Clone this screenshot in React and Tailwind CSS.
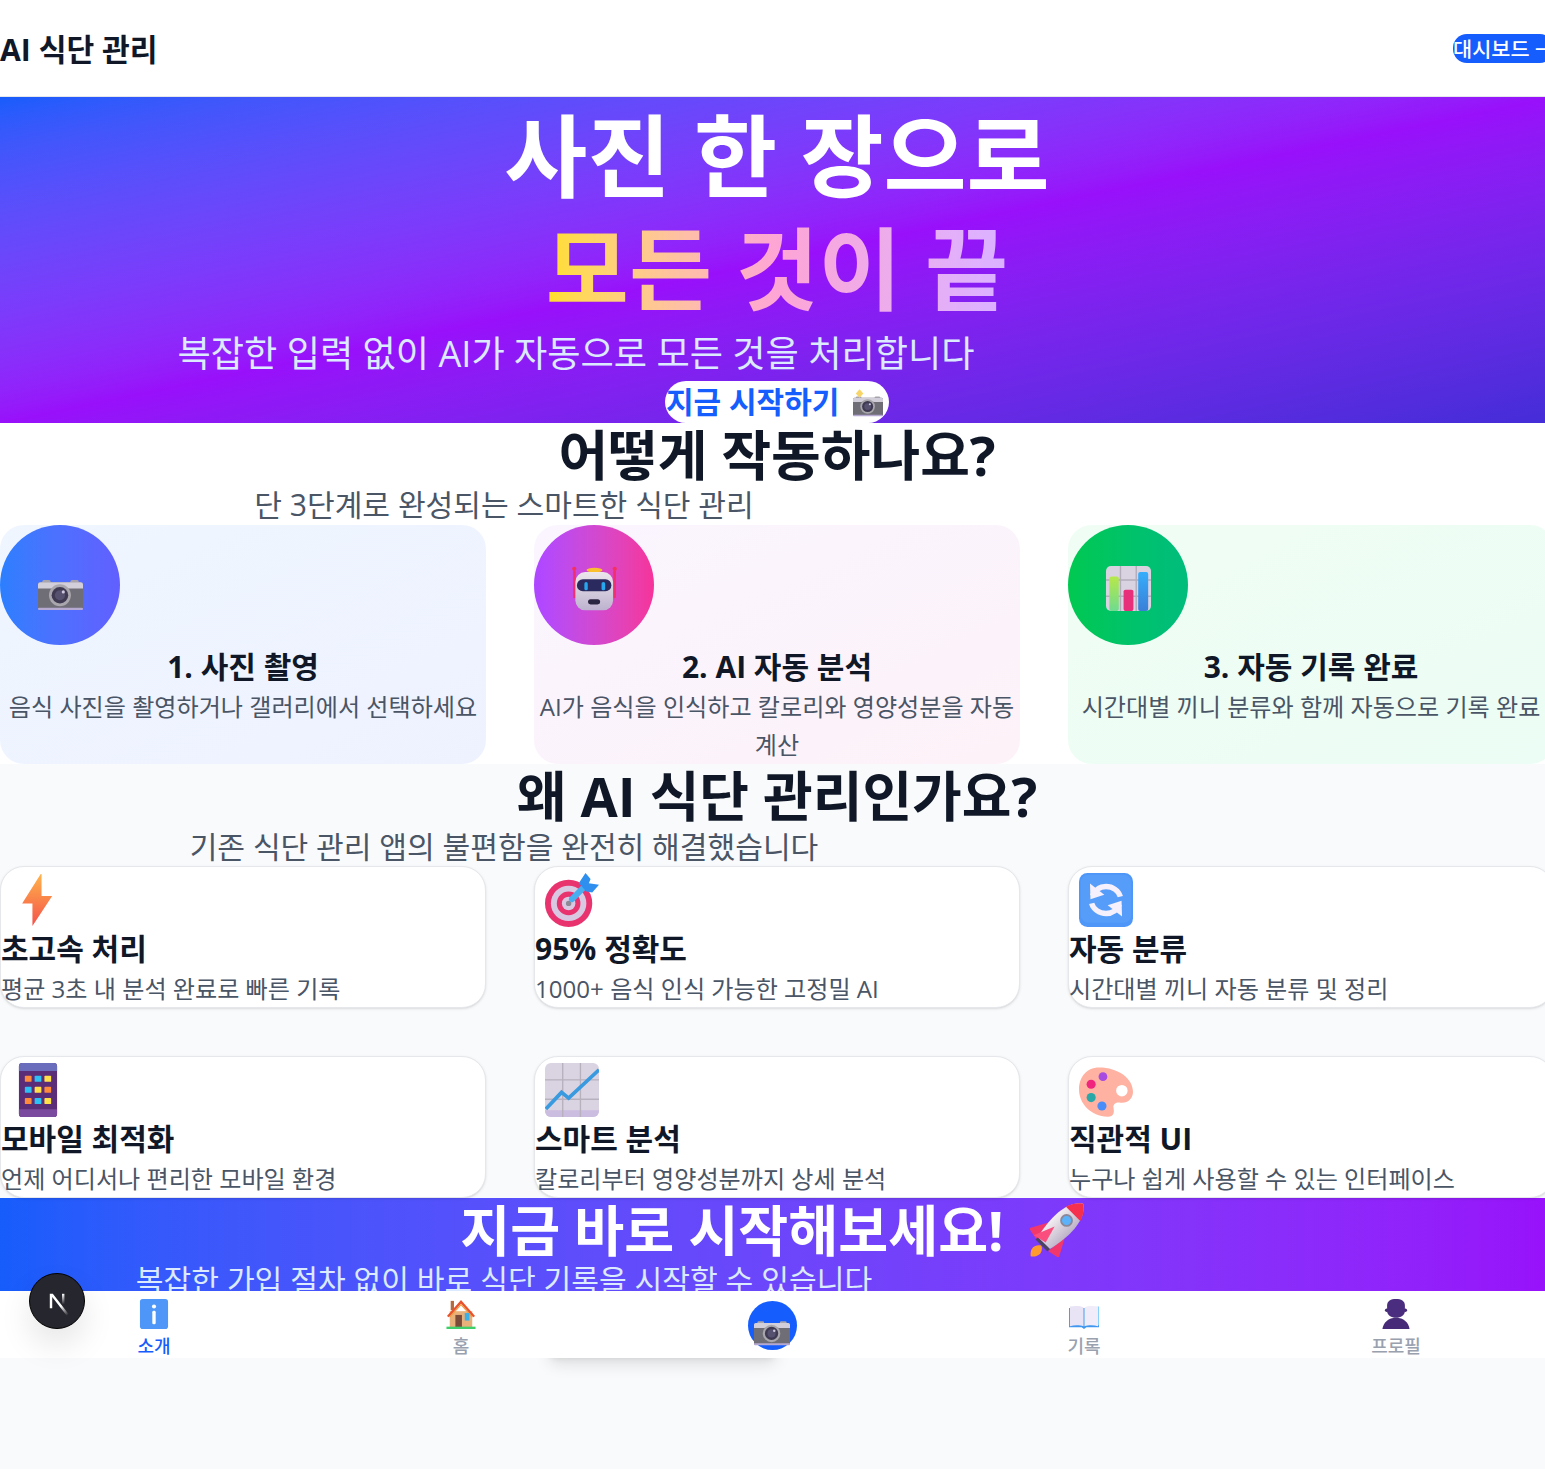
import React from 'react';

/* Fluent-style emoji, all drawn in a 32x32 box */
const CameraBody = () => (
  <>
    <rect x="3" y="10" width="6" height="3" rx="1.2" fill="#a8a5ad" />
    <rect x="23" y="10" width="6" height="3" rx="1.2" fill="#a8a5ad" />
    <rect x="0" y="11.5" width="32" height="19.5" rx="1.6" fill="#6f6d75" />
    <path d="M1.6 11.5h28.8A1.6 1.6 0 0 1 32 13.1V16H0v-2.9A1.6 1.6 0 0 1 1.6 11.5z" fill="#d3cfda" />
    <rect x="0" y="29.6" width="32" height="1.7" rx="0.8" fill="#b5a9d2" />
    <circle cx="15.6" cy="20.8" r="7.8" fill="#a9a7ad" />
    <circle cx="15.6" cy="20.8" r="5.9" fill="#3f3a52" />
    <circle cx="15.6" cy="20.8" r="3.6" fill="#575170" />
    <circle cx="18" cy="18.4" r="1.1" fill="#cfc8e0" />
  </>
);

const Camera = ({ className }) => (
  <svg viewBox="0 0 32 32" className={className}><CameraBody /></svg>
);

const CameraFlash = ({ className }) => (
  <svg viewBox="0 0 32 32" className={className}>
    <CameraBody />
    <path d="M7 2.5l4 4.5L7 11.5 3 7z" fill="#f8d568" />
  </svg>
);

const Robot = ({ className }) => (
  <svg viewBox="0 0 32 32" className={className}>
    <defs>
      <linearGradient id="robotHead" x1="0" y1="0" x2="0" y2="1">
        <stop offset="0" stopColor="#ece7ec" />
        <stop offset="1" stopColor="#bdb2cf" />
      </linearGradient>
    </defs>
    <rect x="0.8" y="3" width="1.8" height="20" rx="0.9" fill="#ef2f6e" />
    <rect x="29.4" y="3" width="1.8" height="20" rx="0.9" fill="#ef2f6e" />
    <circle cx="1.6" cy="2" r="1.5" fill="#f5305f" />
    <circle cx="30.4" cy="2" r="1.5" fill="#f5305f" />
    <ellipse cx="16" cy="2.9" rx="5.7" ry="1.7" fill="#fbc02d" />
    <rect x="2.4" y="4.3" width="26.8" height="27.2" rx="7" fill="url(#robotHead)" />
    <rect x="3.5" y="9.5" width="24.5" height="8.5" rx="4.2" fill="#2b2a5e" />
    <rect x="8.8" y="11.4" width="2.4" height="5.9" rx="1.2" fill="#27a7ee" />
    <rect x="21" y="11.4" width="2.6" height="5.9" rx="1.2" fill="#27a7ee" />
    <rect x="11.4" y="23.7" width="8.6" height="3.6" rx="1.8" fill="#2a2540" />
  </svg>
);

const BarChart = ({ className }) => (
  <svg viewBox="0 0 32 32" className={className}>
    <defs>
      <linearGradient id="barGreen" x1="0" y1="0" x2="0" y2="1">
        <stop offset="0" stopColor="#b7e84a" />
        <stop offset="1" stopColor="#6edb8f" />
      </linearGradient>
      <linearGradient id="barBlue" x1="0" y1="0" x2="0" y2="1">
        <stop offset="0" stopColor="#35aefb" />
        <stop offset="1" stopColor="#3a7fd8" />
      </linearGradient>
    </defs>
    <rect width="32" height="32" rx="3.5" fill="#d9d3e1" />
    <path d="M10.3 0v32M21.5 0v32M0 10h32M0 21.5h32" stroke="#b3acba" strokeWidth="1" />
    <rect x="2.4" y="7.5" width="6.7" height="24.5" rx="1.4" fill="url(#barGreen)" />
    <rect x="12.5" y="16.8" width="7" height="15.2" rx="1.4" fill="#e8307a" />
    <rect x="22.9" y="4.3" width="7.1" height="27.7" rx="1.4" fill="url(#barBlue)" />
  </svg>
);

const Bolt = ({ className }) => (
  <svg viewBox="0 0 32 32" className={className}>
    <defs>
      <linearGradient id="boltFill" x1="0.5" y1="0" x2="0.5" y2="1">
        <stop offset="0" stopColor="#ffb34a" />
        <stop offset="1" stopColor="#f4524a" />
      </linearGradient>
    </defs>
    <polygon points="17.6,0.6 6.6,18 12.7,18 12.7,31.4 24.4,13.6 18.1,13.6 18.1,0.6" fill="url(#boltFill)" />
  </svg>
);

const Target = ({ className }) => (
  <svg viewBox="0 0 32 32" className={className}>
    <circle cx="14" cy="18" r="14" fill="#e8336f" />
    <circle cx="14" cy="18" r="10.5" fill="#d9c8e2" />
    <circle cx="14" cy="18" r="7" fill="#e8336f" />
    <circle cx="14" cy="18" r="4" fill="#d9c8e2" />
    <circle cx="14" cy="18" r="1.6" fill="#8f8996" />
    <path d="M16 15.5L24 7.5" stroke="#47aef0" strokeWidth="3.6" strokeLinecap="round" />
    <path d="M20 6L24 0 27 3.5 26 6 32 7 28 11.5 24.5 11z" fill="#2f8fee" />
  </svg>
);

const Refresh = ({ className }) => (
  <svg viewBox="0 0 32 32" className={className}>
    <rect width="32" height="32" rx="5" fill="#4e97f8" />
    <rect x="1" y="1" width="30" height="28.5" rx="4.5" fill="#559df9" />
    <path d="M8 13.5C9.5 9.8 12.7 8 16 8c4 0 7.5 2.5 8.5 6" fill="none" stroke="#f6effc" strokeWidth="3.2" />
    <path d="M6.5 6.2l.3 9.3 8.2-2.6z" fill="#f6effc" />
    <path d="M24 18.5C22.5 22.2 19.3 24 16 24c-4 0-7.5-2.5-8.5-6" fill="none" stroke="#f6effc" strokeWidth="3.2" />
    <path d="M25.5 25.8l-.3-9.3-8.2 2.6z" fill="#f6effc" />
  </svg>
);

const Tablet = ({ className }) => {
  const orange = '#ff8a3c';
  const blue = '#2cc0f5';
  const yellow = '#ffe04a';
  const rows = [
    [orange, blue, yellow],
    [blue, yellow, orange],
    [orange, blue, yellow],
  ];
  return (
    <svg viewBox="0 0 32 32" className={className}>
      <rect x="4.7" y="0" width="22.6" height="32" rx="2" fill="#5b2d78" />
      <path d="M6.7 0h18.6a2 2 0 0 1 2 2v2.7H4.7V2a2 2 0 0 1 2-2z" fill="#6a6cbc" />
      <path d="M4.7 27.4h22.6V30a2 2 0 0 1-2 2H6.7a2 2 0 0 1-2-2z" fill="#7a4a9e" />
      {rows.map((row, i) =>
        row.map((c, j) => (
          <rect key={`${i}-${j}`} x={8.2 + j * 5.8} y={7.5 + i * 6.6} width="4" height="3.6" rx="0.5" fill={c} />
        ))
      )}
    </svg>
  );
};

const LineChart = ({ className }) => (
  <svg viewBox="0 0 32 32" className={className}>
    <rect width="32" height="32" rx="3.5" fill="#dad4e2" />
    <path d="M0 28h32v.5a3.5 3.5 0 0 1-3.5 3.5h-25A3.5 3.5 0 0 1 0 28.5z" fill="#cbbde0" />
    <path d="M10.5 0v32M21 0v32M0 10h32M0 21.5h32" stroke="#b7b0bd" strokeWidth="0.8" />
    <path d="M0.5 27.3L9.8 17.4 14 20.8 32 4" fill="none" stroke="#3a9ae0" strokeWidth="2.2" />
  </svg>
);

const Palette = ({ className }) => (
  <svg viewBox="0 0 32 32" className={className}>
    <path
      fillRule="evenodd"
      d="M12 2.6C4 2.6 0 9 0 15.5 0 24 7 31.5 17 31.8c3.5.1 4-2.3 3.5-4.8-.5-2.5 1-4 4-3.5 4.5.5 7.5-2.5 7.5-6.5C32 9 23 2.6 12 2.6zM25.4 13a3.4 3.4 0 1 1 0 6.8 3.4 3.4 0 0 1 0-6.8z"
      fill="#ffb2a2"
    />
    <circle cx="14.2" cy="8.1" r="2.6" fill="#a84be0" />
    <circle cx="7.2" cy="12.6" r="2.7" fill="#f0267e" />
    <circle cx="7.2" cy="20.5" r="2.7" fill="#2aa8a8" />
    <circle cx="13.6" cy="25.5" r="2.7" fill="#4a8cf8" />
  </svg>
);

const Rocket = ({ className }) => (
  <svg viewBox="0 0 32 32" className={className}>
    <defs>
      <linearGradient id="rocketBody" x1="0" y1="0" x2="1" y2="0">
        <stop offset="0" stopColor="#f4eff2" />
        <stop offset="1" stopColor="#bdb3c8" />
      </linearGradient>
    </defs>
    <g transform="rotate(45 16 16)">
      <path d="M16 29c-4 2.5-3.5 6.5 0 9 3.5-2.5 4-6.5 0-9z" fill="#ff9a2e" />
      <path d="M9.5 16L3.5 27l7.5 1.5z" fill="#f2386a" />
      <path d="M22.5 16L28.5 27 21 28.5z" fill="#f2386a" />
      <path d="M16 -6C23.5 -1 24.5 12 21 27h-10C7.5 12 8.5 -1 16 -6z" fill="url(#rocketBody)" />
      <path d="M16 -6c3 2 5 5 6 8.5h-12c1-3.5 3-6.5 6-8.5z" fill="#f5304e" />
      <rect x="11" y="27" width="10" height="2" fill="#4a4460" />
      <path d="M13.5 15.5L8.5 28l8-2z" fill="#fa4f7e" />
      <circle cx="16" cy="8" r="3.8" fill="#8c8799" />
      <circle cx="16" cy="8" r="2.7" fill="#5bb2fb" />
    </g>
  </svg>
);

const Info = ({ className }) => (
  <svg viewBox="0 0 32 32" className={className}>
    <rect x="1" width="30" height="32" rx="3" fill="#4e97f8" />
    <circle cx="16" cy="8" r="2.2" fill="#fff" />
    <rect x="14.2" y="12.5" width="3.6" height="14.5" rx="1.5" fill="#fff" />
  </svg>
);

const House = ({ className }) => (
  <svg viewBox="0 0 32 32" className={className}>
    <rect x="5" y="2" width="3.5" height="10" fill="#b5693f" />
    <rect x="4" y="13" width="24" height="17" fill="#e8b07a" />
    <path d="M16 1L1 18l2 1.5L16 5l13 14.5 2-1.5z" fill="#e8532e" />
    <path d="M16 5L4 18.5V20L16 7l12 13v-1.5z" fill="#f09a3e" />
    <rect x="10" y="17" width="7" height="13" fill="#7b4b3a" />
    <rect x="20" y="15" width="5" height="8" fill="#3ab0e8" />
    <rect x="0.5" y="29.5" width="31" height="2.5" fill="#3fcf6a" />
  </svg>
);

const Book = ({ className }) => (
  <svg viewBox="0 0 32 32" className={className}>
    <path d="M0 9.5v20.5h13.5l2.5 2 2.5-2H32V9.5z" fill="#3f98ee" />
    <path d="M30.5 8h1.5v20h-1.5z" fill="#7fd0fa" />
    <path d="M1 8c5-1 11-1 14.5 1v20c-4-1.5-10-1.5-14.5 0z" fill="#e9e3f6" />
    <path d="M31 8c-5-1-11-1-14.5 1v20c4-1.5 10-1.5 14.5 0z" fill="#f0ecfa" />
  </svg>
);

const Person = ({ className }) => (
  <svg viewBox="0 0 32 32" className={className}>
    <circle cx="6" cy="12" r="1.8" fill="#452a75" />
    <circle cx="26" cy="12" r="1.8" fill="#452a75" />
    <path d="M6.5 7c0-5 4-7 9.5-7s9.5 2 9.5 7v6c0 4-4.5 7-9.5 7s-9.5-3-9.5-7z" fill="#4a2d7e" />
    <path d="M1.5 32c1-7 6.5-12 14.5-12s13.5 5 14.5 12z" fill="#472b78" />
  </svg>
);

const steps = [
  {
    Icon: Camera,
    title: '1. 사진 촬영',
    desc: '음식 사진을 촬영하거나 갤러리에서 선택하세요',
    card: 'bg-gradient-to-br from-blue-50 to-indigo-50',
    circle: 'bg-gradient-to-r from-blue-500 to-indigo-500',
  },
  {
    Icon: Robot,
    title: '2. AI 자동 분석',
    desc: 'AI가 음식을 인식하고 칼로리와 영양성분을 자동 계산',
    card: 'bg-gradient-to-br from-purple-50 to-pink-50',
    circle: 'bg-gradient-to-r from-purple-500 to-pink-500',
  },
  {
    Icon: BarChart,
    title: '3. 자동 기록 완료',
    desc: '시간대별 끼니 분류와 함께 자동으로 기록 완료',
    card: 'bg-gradient-to-br from-green-50 to-emerald-50',
    circle: 'bg-gradient-to-r from-green-500 to-emerald-500',
  },
];

const features = [
  { Icon: Bolt, title: '초고속 처리', desc: '평균 3초 내 분석 완료로 빠른 기록' },
  { Icon: Target, title: '95% 정확도', desc: '1000+ 음식 인식 가능한 고정밀 AI' },
  { Icon: Refresh, title: '자동 분류', desc: '시간대별 끼니 자동 분류 및 정리' },
  { Icon: Tablet, title: '모바일 최적화', desc: '언제 어디서나 편리한 모바일 환경' },
  { Icon: LineChart, title: '스마트 분석', desc: '칼로리부터 영양성분까지 상세 분석' },
  { Icon: Palette, title: '직관적 UI', desc: '누구나 쉽게 사용할 수 있는 인터페이스' },
];

const NavItem = ({ Icon, label, active, className }) => (
  <div className={`flex shrink-0 flex-col items-center pt-2 ${className}`}>
    <Icon className="w-[30px] h-[30px]" />
    <span className={`mt-[6px] text-[18px] leading-[22px] font-medium ${active ? 'text-blue-600' : 'text-gray-400'}`}>
      {label}
    </span>
  </div>
);

export default function App() {
  return (
    <div className="relative min-h-screen overflow-hidden bg-gray-50 font-['Open_Sans','Noto_Sans_CJK_KR',sans-serif]">
      <div className="w-[1554px]">
        {/* Header */}
        <header className="flex h-[97px] items-center justify-between border-b border-gray-200 bg-white">
          <span className="pt-[3px] text-[30.2px] font-bold text-gray-900">AI 식단 관리</span>
          <button className="h-[29px] w-[101px] whitespace-nowrap rounded-[14px] bg-blue-600 text-left text-[20.8px] leading-[30px] font-medium text-white">
            대시보드 →
          </button>
        </header>

        {/* Hero */}
        <section className="bg-gradient-to-br from-blue-600 via-purple-600 to-indigo-700 text-center">
          <h1 className="pt-[2px] text-[90.3px] leading-[112.5px] font-bold text-white">
            사진 한 장으로
            <br />
            <span className="bg-gradient-to-r from-yellow-300 via-pink-300 to-purple-300 bg-clip-text text-transparent">
              모든 것이 끝
            </span>
          </h1>
          <p className="w-[1152px] pt-[2px] text-[36.15px] leading-[54.5px] text-blue-100">
            복잡한 입력 없이 AI가 자동으로 모든 것을 처리합니다
          </p>
          <button className="mx-auto flex h-[42px] w-[224px] items-center gap-[14px] rounded-full bg-white pl-px text-[30px] font-bold text-blue-600">
            <span>지금 시작하기</span>
            <CameraFlash className="h-[30px] w-[30px]" />
          </button>
        </section>

        {/* How it works */}
        <section className="bg-white text-center">
          <h2 className="text-[54px] leading-[1.2] font-bold text-gray-900">어떻게 작동하나요?</h2>
          <p className="h-[37.5px] w-[1008px] text-[30.12px] leading-[36px] text-gray-600">
            단 3단계로 완성되는 스마트한 식단 관리
          </p>
          <div className="grid grid-cols-3 gap-12">
            {steps.map(({ Icon, title, desc, card, circle }) => (
              <div key={title} className={`rounded-3xl ${card}`}>
                <div className={`flex h-[120px] w-[120px] items-end justify-center rounded-full pb-[34px] ${circle}`}>
                  <Icon className="h-[45px] w-[45px]" />
                </div>
                <h3 className="h-[43px] text-[30px] leading-[44px] font-bold text-gray-900">{title}</h3>
                <p className="text-[24.1px] leading-[38px] text-gray-600">{desc}</p>
              </div>
            ))}
          </div>
        </section>

        {/* Why */}
        <section className="text-center">
          <h2 className="text-[54px] leading-[1.2] font-bold text-gray-900">왜 AI 식단 관리인가요?</h2>
          <p className="h-[37.5px] w-[1008px] text-[30.12px] leading-[35px] text-gray-600">
            기존 식단 관리 앱의 불편함을 완전히 해결했습니다
          </p>
          <div className="grid grid-cols-3 gap-12 text-left">
            {features.map(({ Icon, title, desc }) => (
              <div key={title} className="rounded-3xl border border-gray-200 bg-white shadow-sm">
                <div className="h-[60px] pt-[6px] pl-[10px]">
                  <Icon className="h-[54px] w-[54px]" />
                </div>
                <h3 className="h-[42.6px] text-[30px] leading-[44px] font-bold text-gray-900">{title}</h3>
                <p className="text-[24.1px] leading-[37.4px] text-gray-600">{desc}</p>
              </div>
            ))}
          </div>
        </section>

        {/* CTA, cut off by the bottom nav */}
        <section className="h-[93px] overflow-hidden bg-gradient-to-r from-blue-600 to-purple-600 text-center">
          <h2 className="flex items-center justify-center gap-[26px] pr-[10px] text-[54.3px] leading-[64.8px] font-bold text-white">
            지금 바로 시작해보세요!
            <Rocket className="h-[54px] w-[54px]" />
          </h2>
          <p className="w-[1008px] text-[30.16px] leading-[36px] text-blue-100">
            복잡한 가입 절차 없이 바로 식단 기록을 시작할 수 있습니다
          </p>
        </section>

        {/* Bottom nav */}
        <div className="relative">
          <div className="absolute top-0 left-[545px] h-full w-[235px] rounded-b-xl shadow-lg" />
          <nav className="relative flex h-[67px] bg-white">
            <NavItem Icon={Info} label="소개" active className="w-[308px]" />
            <NavItem Icon={House} label="홈" className="w-[306px]" />
            <div className="flex w-[316px] shrink-0 justify-center pt-[10px]">
              <div className="flex h-[49px] w-[49px] items-end justify-center rounded-full bg-blue-600 pb-[4px]">
                <Camera className="h-[36px] w-[36px]" />
              </div>
            </div>
            <NavItem Icon={Book} label="기록" className="w-[308px]" />
            <NavItem Icon={Person} label="프로필" className="w-[316px]" />
          </nav>
        </div>
      </div>

      {/* Dev indicator over the page */}
      <div className="absolute top-[1273px] left-[29px] flex h-14 w-14 items-center justify-center rounded-full border border-black bg-[#26262e] shadow-[0_16px_32px_rgba(0,0,0,0.1)]">
        <svg viewBox="0 0 180 180" className="h-[36px] w-[36px]">
          <defs>
            <linearGradient id="nDiag" x1="109" y1="116.5" x2="144.5" y2="160.5" gradientUnits="userSpaceOnUse">
              <stop offset="0" stopColor="#fff" />
              <stop offset="1" stopColor="#fff" stopOpacity="0" />
            </linearGradient>
            <linearGradient id="nRight" x1="121" y1="54" x2="120.8" y2="106.9" gradientUnits="userSpaceOnUse">
              <stop offset="0" stopColor="#fff" />
              <stop offset="1" stopColor="#fff" stopOpacity="0" />
            </linearGradient>
          </defs>
          <path d="M149.5 157.5L69.1 54H54V126H66.1V69.4L140 164.8C143.3 162.6 146.5 160.2 149.5 157.5Z" fill="url(#nDiag)" />
          <rect x="115" y="54" width="12" height="72" fill="url(#nRight)" />
        </svg>
      </div>
    </div>
  );
}
